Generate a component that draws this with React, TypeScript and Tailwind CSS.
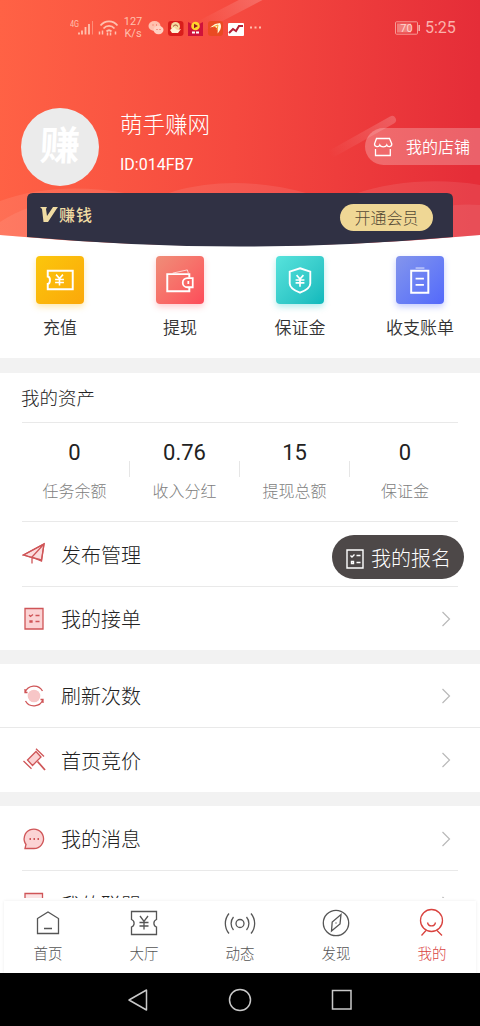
import type { ReactNode } from 'react';

const actions = [
  { label: '充值', icon: 'recharge', tile: 'from-[#fbc60c] to-[#fba80a] shadow-[0_3px_6px_rgba(251,190,30,0.35)]' },
  { label: '提现', icon: 'wallet', tile: 'from-[#ef8d78] to-[#fd4a5a] shadow-[0_3px_6px_rgba(253,90,100,0.3)]' },
  { label: '保证金', icon: 'shield', tile: 'from-[#56e3dc] to-[#0bb9bc] shadow-[0_3px_6px_rgba(40,200,200,0.35)]' },
  { label: '收支账单', icon: 'bill', tile: 'from-[#8495ec] to-[#5468fb] shadow-[0_3px_6px_rgba(90,110,250,0.35)]' },
];

const assets = [
  { value: '0', label: '任务余额' },
  { value: '0.76', label: '收入分红' },
  { value: '15', label: '提现总额' },
  { value: '0', label: '保证金' },
];

const tabs = [
  { label: '首页', icon: 'home' },
  { label: '大厅', icon: 'hall' },
  { label: '动态', icon: 'feed' },
  { label: '发现', icon: 'compass' },
  { label: '我的', icon: 'me', active: true },
];

const actionIcons: Record<string, ReactNode> = {
  recharge: (
    <>
      <path d="M12 15h25.500v19H12v-5.500c3-.5 3-7 0-7.500z" strokeWidth="2" />
      <path d="m20.500 19 3.500 4 3.500-4M24 23v7M19.500 24h9M19.500 27h9" strokeWidth="1.600" />
    </>
  ),
  wallet: (
    <>
      <path d="M34 22v-3.500H11.500V36H34v-4" strokeWidth="2" />
      <path d="m17 17.500 15-3.300 1 3.300" strokeWidth="1" opacity=".7" />
      <path d="M37.500 22.500h-5.500a4.700 4.700 0 0 0 0 9.400h5.500zM33 25.500v3.200" strokeWidth="1.800" />
    </>
  ),
  shield: (
    <>
      <path d="M24.500 12.500 35 16v12c0 4.500-5.500 7.500-10.500 9.500C19.500 35.500 14 32.500 14 28V16z" strokeWidth="1.900" />
      <path d="m21 19.500 3.500 4 3.500-4M24.500 23.500v8M20 24.500h9M20 27.500h9" strokeWidth="1.700" />
    </>
  ),
  bill: (
    <>
      <path d="M15.500 15h17.500v22.500H15.500z" strokeWidth="2" />
      <path d="M20 12.300h9" strokeWidth="1.400" opacity=".6" />
      <path d="M20 23h8.500M20 29.500h8.500" strokeWidth="1.800" />
    </>
  ),
};

const rowIcons: Record<string, ReactNode> = {
  plane: (
    <>
      <path d="M1.500 13 22 2l-2.500 17-7.500-3z" fill="#fbdcdd" />
      <path d="M22 2 10 15v6.500M1.500 13 10 15.500 19.500 18 22 2z" />
    </>
  ),
  order: (
    <>
      <path d="M3 1.500h18v20.500H3z" fill="#fbd3d4" />
      <path d="m7 8 1.500 1.500L11 7.500M13.500 8.500h4M13.500 14.500h4M8 14h2v1H8z" />
    </>
  ),
  refresh: (
    <>
      <circle cx="12" cy="12" r="6.300" fill="#f7c6c7" stroke="none" />
      <path d="M3 8.500A9.700 9.700 0 0 1 20.500 7M21 15.500A9.700 9.700 0 0 1 3.500 17M3 5v3.500h2.500M21 19v-3.500h-2.500" />
    </>
  ),
  hammer: (
    <>
      <path d="m5.500 12 8.500-8.500L19 9l-8.500 8.500z" fill="#fbd3d4" />
      <path d="m14 .8 8 7.700M1.500 13l8 7.700" />
      <path d="m15.500 13.500 7.500 8.500" strokeWidth="1.800" />
    </>
  ),
  message: (
    <>
      <path d="M3 21.500 4 17.500A9.700 9.700 0 1 1 12 21.500z" fill="#fbd3d4" />
      <path d="M7.500 12h1.500M11.500 12H13M15.500 12H17" strokeWidth="1.800" />
    </>
  ),
  union: <path d="M3 1.500h17.500v18H3z" fill="#fbe3e4" />,
};

const tabIcons: Record<string, ReactNode> = {
  home: <path d="M5.500 11.500 16 5l10.500 6.500v15h-21zM12 21.500h8" />,
  hall: (
    <>
      <path d="M3.500 4.500h25v8a4 4 0 0 0 0 7.500v7.500h-25V20a4 4 0 0 0 0-7.500z" />
      <path d="m12 9 4 5.500L20 9M16 14.500V22.500M11.500 15.500h9M11.500 19h9" />
    </>
  ),
  feed: (
    <>
      <circle cx="16" cy="16.500" r="4" />
      <path d="M9.500 10a10 10 0 0 0 0 13M22.500 10a10 10 0 0 1 0 13M5 6.500a15.500 15.500 0 0 0 0 20M27 6.500a15.500 15.500 0 0 1 0 20" />
    </>
  ),
  compass: (
    <>
      <circle cx="16" cy="16" r="12.700" />
      <path d="m21 7.500-1 9.500-8.500 7 .7-9zM16 15.500v1" />
    </>
  ),
  me: (
    <>
      <circle cx="15.500" cy="13.500" r="11" />
      <path d="M11.500 15.500c1 4.500 7 4.500 8 0M10 23.500l-4.500 5M21 23.500l5 5" />
    </>
  ),
};

function HeaderBackground() {
  return (
    <svg className="absolute inset-0" width="480" height="250" viewBox="0 0 480 250" fill="none">
      <defs>
        <linearGradient id="sky" x1="0" y1="0" x2="480" y2="20" gradientUnits="userSpaceOnUse">
          <stop stopColor="#ff6245" />
          <stop offset=".5" stopColor="#f5493f" />
          <stop offset="1" stopColor="#e52d38" />
        </linearGradient>
        <linearGradient id="streakTop" x1="262" y1="0" x2="200" y2="30" gradientUnits="userSpaceOnUse">
          <stop stopColor="#fff" stopOpacity=".2" />
          <stop offset="1" stopColor="#fff" stopOpacity="0" />
        </linearGradient>
        <linearGradient id="streak" x1="396" y1="118" x2="330" y2="155" gradientUnits="userSpaceOnUse">
          <stop stopColor="#fff" stopOpacity=".2" />
          <stop offset="1" stopColor="#fff" stopOpacity="0" />
        </linearGradient>
      </defs>
      <path d="M0 0h480v235Q240 257 0 235z" fill="url(#sky)" />
      <path d="M266-8 195 29" stroke="url(#streakTop)" strokeWidth="11" />
      <path d="m392 120-66 37" stroke="url(#streak)" strokeWidth="8" strokeLinecap="round" />
      <path d="M0 201c35-13 80-17 130-7 20 4 30 2 45-3 40-11 85-11 135 3 18 4 28 4 45 0 35-13 85-16 125-9v50Q240 257 0 235z" fill="#fff" fillOpacity=".09" />
      <path d="M0 222c18-12 40-20 70-24 120-10 280 40 385 7q12-1 25 0v30Q240 257 0 235z" fill="#fff" fillOpacity=".08" />
      <path d="M33 193h414q6 0 6 6v38Q240 256 27 237v-38q0-6 6-6z" fill="#303144" />
    </svg>
  );
}

function StatusBar() {
  return (
    <div className="flex h-[56px] items-center pl-[70px] pr-6 text-[#ffc0ae]">
      <svg width="62" height="24" viewBox="0 0 62 24" fill="none" stroke="currentColor">
        <text x="0" y="11" fontSize="9.500" fontFamily="Roboto, sans-serif" fill="currentColor" stroke="none" textLength="9" lengthAdjust="spacingAndGlyphs">4G</text>
        <path d="M9 18.500v-2M12 18.500v-4M15.500 18.500V11M19 18.500V8" strokeWidth="1.800" />
        <path d="M22.500 18.500V5" opacity=".5" />
        <path d="M30.500 9.500c4.500-5.500 12.500-5.500 17 0M33.500 12.500c3-3.500 8-3.500 11 0M36.500 15.500c1.500-1.500 3.500-1.500 5 0" strokeWidth="1.800" />
        <path d="M29.500 18.500v-3M32.500 18.500v-4M37.500 16.500v3M40.500 16.500v3M45.500 15.500v3" strokeWidth="1.500" />
      </svg>
      <div className="-ml-[9px] w-[20px] text-center text-[11px] leading-[12px]">
        <div>127</div>
        <div>K/s</div>
      </div>
      <svg className="ml-[4px]" width="118" height="18" viewBox="0 0 118 18">
        <ellipse cx="7.500" cy="7" rx="6" ry="5" fill="#ffc0ae" />
        <ellipse cx="11.500" cy="11" rx="5" ry="4.200" fill="#ffd0c2" />
        <path d="M5.500 6h1M9 6h1M9.500 10.500h1M12.500 10.500h1" stroke="#ed5b4b" />
        <rect x="21" y="2" width="15.500" height="15" rx="3" fill="#d91d1b" />
        <circle cx="28.500" cy="7.500" r="4.500" fill="#f4dda0" />
        <path d="m23 11 4-3 3 3 4-1-3 4h-6z" fill="#fff3d5" />
        <path d="M26 7.500c2-2 3-2 5 0" stroke="#a03425" fill="none" />
        <path d="m41 3 7.500 4L56 3v14H41z" fill="#cf123b" />
        <circle cx="48.500" cy="7" r="4.300" fill="#ffd42a" />
        <path d="m47 4.800 4 2.200-4 2.200z" fill="#931525" />
        <path d="M45 13.500h7" stroke="#fff" strokeWidth="2" strokeDasharray="3 1" />
        <rect x="61" y="2" width="15" height="15" rx="3" fill="#ea4a22" />
        <path d="m63 8.500 5-3.500 5-1c2 3 1 7-2.500 10.500C71.500 9 70 7 63 8.500z" fill="#fff7d5" />
        <path d="m66 8 5-2-1 5" stroke="#f4a02b" fill="none" />
        <rect x="81" y="4" width="16" height="13" rx="1" fill="#fff" />
        <path d="m82 14 4-4 3 2 3-5h4" stroke="#b52136" strokeWidth="2" fill="none" />
        <path d="M103 8.500h2M107.500 8.500h2M112 8.500h2" stroke="#ffc0ae" strokeWidth="1.800" />
      </svg>
      <svg className="ml-auto" width="28" height="14" viewBox="0 0 28 14" fill="none">
        <rect x="3.500" y=".8" width="22" height="12.400" rx="1" stroke="#f69a94" />
        <path d="M5 2.500h14v9H5z" fill="#f27e7b" />
        <path d="M27.200 4v6" stroke="#f8aba5" strokeWidth="1.600" />
        <text x="14.500" y="10.800" textAnchor="middle" fontSize="11" fontFamily="Roboto, sans-serif" fill="#ffd5cf">70</text>
      </svg>
      <span className="ml-[5px] w-[31px] whitespace-nowrap text-[16px] leading-none text-[#fbb1ac]">5:25</span>
    </div>
  );
}

function Row({ icon, label, arrow = true, className = '' }: { icon: string; label: string; arrow?: boolean; className?: string }) {
  return (
    <div className={`flex shrink-0 items-center pl-[22px] pr-[29px] ${className}`}>
      <svg width="24" height="24" viewBox="0 0 24 24" fill="none" stroke="#cf5557" strokeWidth="1.300">
        {rowIcons[icon]}
      </svg>
      <span className="ml-[15px] pt-[3px] text-[20px] font-light leading-none text-[#222]">{label}</span>
      {arrow && (
        <svg className="ml-auto" width="10" height="16" viewBox="0 0 10 16" fill="none" stroke="#b9b9b9" strokeWidth="1.200">
          <path d="m1.500 1 7 7-7 7" />
        </svg>
      )}
    </div>
  );
}

function Divider({ full = false }: { full?: boolean }) {
  return <div className={`h-px shrink-0 bg-[#e9e9e9] ${full ? '' : 'mx-[22px]'}`} />;
}

export default function App() {
  return (
    <div className="flex h-[1026px] w-[480px] flex-col overflow-hidden bg-white font-['Roboto','Noto_Sans_CJK_SC',sans-serif]">
      <main className="relative flex h-[898px] shrink-0 flex-col overflow-hidden">
        <header className="relative h-[250px] shrink-0">
          <HeaderBackground />
          <div className="relative">
            <StatusBar />
            <div className="flex h-[137px] pl-[21px] pt-[52px]">
              <div className="flex size-[78px] items-center justify-center rounded-full bg-[#ebebeb]">
                <span className="-skew-x-3 text-[40px] font-bold leading-none text-white">赚</span>
              </div>
              <div className="ml-[21px] pt-[5px] text-white">
                <div className="text-[22.500px] font-light leading-[24px]">萌手赚网</div>
                <div className="mt-[19px] text-[16px] leading-[18px]">ID:014FB7</div>
              </div>
              <div className="ml-auto mt-[20px] flex h-[37px] w-[115px] items-center rounded-l-full bg-white/25 pl-[8px] text-white">
                <svg width="20" height="20" viewBox="0 0 20 20" fill="none" stroke="currentColor" strokeWidth="1.300">
                  <path d="M3.500 1.500h13L18.800 7c0 3-4 3.500-5 1-1 2.500-6 2.500-7 0-1 2.500-5.300 2-5.300-1zM2.500 12v6.500h14.800V12" />
                </svg>
                <span className="ml-[13px] whitespace-nowrap pt-[2px] text-[16px] font-[350] leading-none">我的店铺</span>
              </div>
            </div>
            <div className="flex h-[44px] items-start justify-between pl-[40px] pr-[47px]">
              <div className="mt-[12px] flex items-center text-[#f0dca3]">
                <svg width="18" height="17" viewBox="0 0 18 17" fill="currentColor">
                  <path d="M0 1h7l-1 2 1 7 6-9h5l-1.500 2-8.500 13H3.500L2 3z" />
                </svg>
                <span className="ml-[1px] pt-[2px] text-[16px] font-medium leading-[17px] tracking-[1px]">赚钱</span>
              </div>
              <div className="mt-[11px] flex h-[27px] w-[93px] items-center justify-center rounded-full bg-[#efd795] pt-[2px] text-[16px] font-light leading-none text-[#554a35]">
                开通会员
              </div>
            </div>
          </div>
        </header>

        <section className="flex h-[108px] shrink-0 pt-[6px]">
          {actions.map((item) => (
            <div key={item.label} className="flex flex-1 flex-col items-center">
              <div className={`size-[48px] rounded-[4px] bg-linear-to-br ${item.tile}`}>
                <svg width="48" height="48" viewBox="0 0 49 49" fill="none" stroke="#fff">
                  {actionIcons[item.icon]}
                </svg>
              </div>
              <span className="mt-[15px] text-[17px] font-[350] leading-[18px] text-[#333]">{item.label}</span>
            </div>
          ))}
        </section>
        <div className="h-[15px] shrink-0 bg-[#f2f2f2]" />

        <h2 className="flex h-[49px] shrink-0 items-center pl-[21px] pt-[4px] text-[18.500px] font-light text-[#222]">我的资产</h2>
        <Divider />
        <section className="mx-[20px] flex h-[98px] shrink-0">
          {assets.map((item, i) => (
            <div key={item.label} className="flex flex-1 items-center">
              <div className="flex flex-1 flex-col items-center">
                <span className="-mt-[3px] text-[22px] leading-[24px] text-[#222]">{item.value}</span>
                <span className="mt-[19px] text-[16px] font-light leading-[16px] text-[#808080]">{item.label}</span>
              </div>
              {i < 3 && <div className="-mt-[7px] h-[16px] w-px bg-[#e6e6e6]" />}
            </div>
          ))}
        </section>
        <Divider />
        <Row icon="plane" label="发布管理" arrow={false} className="h-[64px]" />
        <Divider />
        <Row icon="order" label="我的接单" className="h-[63px]" />
        <div className="h-[14px] shrink-0 bg-[#f2f2f2]" />
        <Row icon="refresh" label="刷新次数" className="h-[63px]" />
        <Divider full />
        <Row icon="hammer" label="首页竞价" className="h-[64px]" />
        <div className="h-[14px] shrink-0 bg-[#f2f2f2]" />
        <Row icon="message" label="我的消息" className="h-[64px] pt-px" />
        <Divider />
        <Row icon="union" label="我的联盟" className="h-[66px]" />

        {/* floating sign-up button */}
        <div className="absolute right-[16px] top-[535px] flex h-[44px] w-[132px] items-center rounded-full bg-[#4d4848] pl-[14px] text-white">
          <svg width="18" height="20" viewBox="0 0 18 20" fill="none" stroke="currentColor" strokeWidth="1.400" className="mt-[3px]">
            <path d="M1 1h16v18H1zM4.500 6.500 6 8l2.500-2.500M10.500 6.500h4M10.500 13.500h4M5.500 12.500h2v2h-2z" />
          </svg>
          <span className="ml-[7px] pt-[3px] text-[20px] font-light leading-none">我的报名</span>
        </div>
      </main>

      <nav className="mx-[4px] mt-[3px] flex h-[72px] shrink-0 bg-white shadow-[0_0_3px_rgba(0,0,0,0.08)]">
        <div className="-mx-[4px] flex flex-1">
          {tabs.map((tab) => (
            <div
              key={tab.label}
              className={`flex flex-1 flex-col items-center pt-[6px] ${tab.active ? 'text-[#d9433f]' : 'text-[#555]'}`}
            >
              <svg width="32" height="32" viewBox="0 0 32 32" fill="none" stroke="currentColor" strokeWidth="1.300">
                {tabIcons[tab.icon]}
              </svg>
              <span className="mt-[8px] text-[14.500px] font-light leading-[16px]">{tab.label}</span>
            </div>
          ))}
        </div>
      </nav>

      <footer className="relative flex h-[53px] shrink-0 items-center justify-center gap-[78px] bg-black">
        <svg width="24" height="24" viewBox="0 0 24 24" fill="none" stroke="#c9c9c9" strokeWidth="1.500" strokeLinejoin="round">
          <path d="M20.500 2v20L3 12z" />
        </svg>
        <svg width="24" height="24" viewBox="0 0 24 24" fill="none" stroke="#c9c9c9" strokeWidth="1.500">
          <circle cx="12" cy="12" r="10.500" />
        </svg>
        <svg width="24" height="24" viewBox="0 0 24 24" fill="none" stroke="#c9c9c9" strokeWidth="1.500">
          <path d="M2.500 2.500h18.500v18.500H2.500z" />
        </svg>
      </footer>
    </div>
  );
}
